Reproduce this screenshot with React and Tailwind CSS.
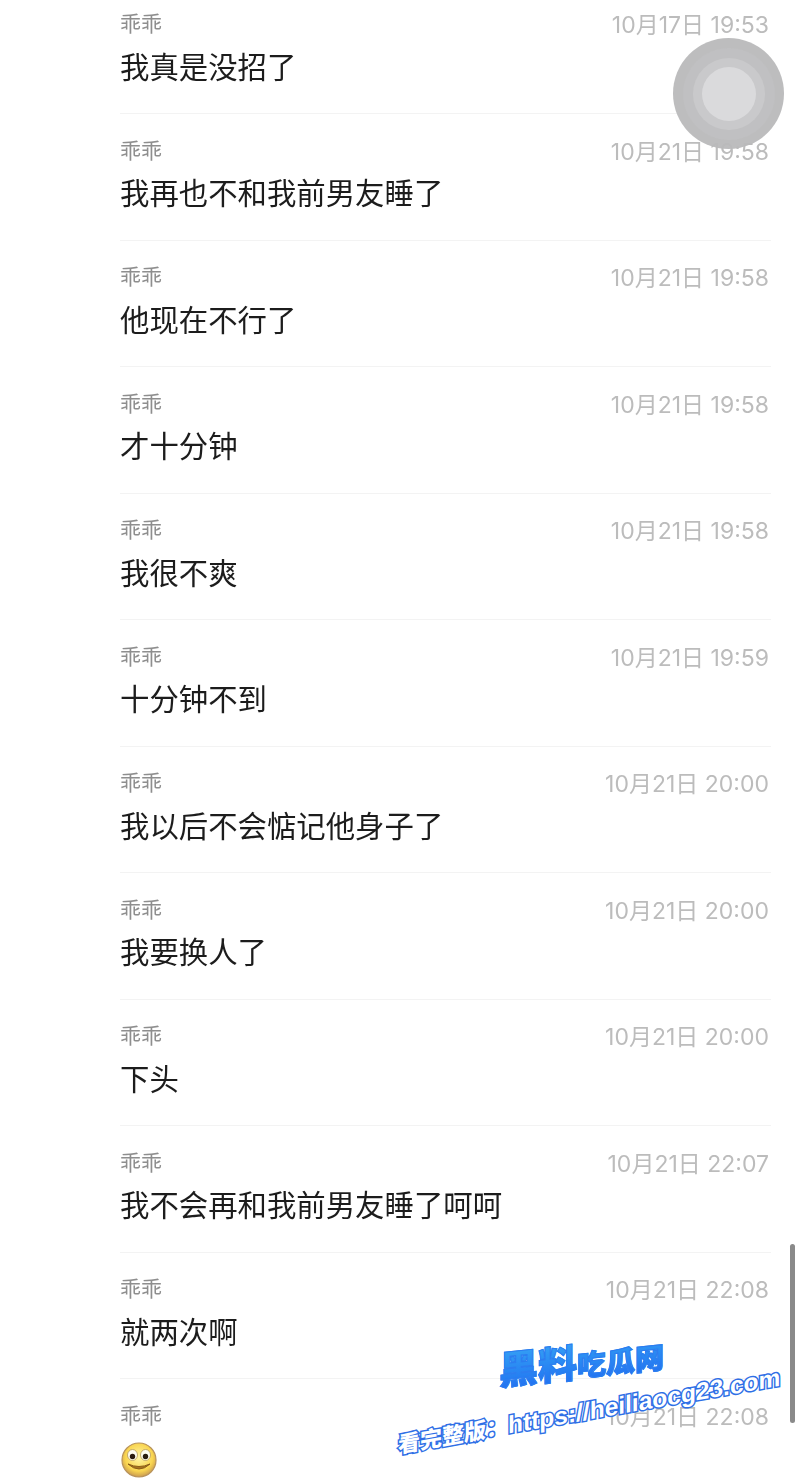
const messages = [
  { time: "10月17日 19:53", text: "我真是没招了" },
  { time: "10月21日 19:58", text: "我再也不和我前男友睡了" },
  { time: "10月21日 19:58", text: "他现在不行了" },
  { time: "10月21日 19:58", text: "才十分钟" },
  { time: "10月21日 19:58", text: "我很不爽" },
  { time: "10月21日 19:59", text: "十分钟不到" },
  { time: "10月21日 20:00", text: "我以后不会惦记他身子了" },
  { time: "10月21日 20:00", text: "我要换人了" },
  { time: "10月21日 20:00", text: "下头" },
  { time: "10月21日 22:07", text: "我不会再和我前男友睡了呵呵" },
  { time: "10月21日 22:08", text: "就两次啊" },
  { time: "10月21日 22:08", text: "" },
]

function Smiley() {
  return (
    <svg width="38" height="38" viewBox="0 0 38 38">
      <defs>
        <radialGradient id="face" cx="50%" cy="42%" r="58%">
          <stop offset="0%" stopColor="#fff6a8" />
          <stop offset="70%" stopColor="#f9d550" />
          <stop offset="100%" stopColor="#c99a50" />
        </radialGradient>
      </defs>
      <circle cx="19" cy="19" r="17" fill="url(#face)" stroke="#b8935c" strokeWidth="1.2" />
      <ellipse cx="12.5" cy="14" rx="5" ry="5.5" fill="#fffdf0" stroke="#b79a5a" strokeWidth="0.8" />
      <ellipse cx="25.5" cy="14" rx="5" ry="5.5" fill="#fffdf0" stroke="#b79a5a" strokeWidth="0.8" />
      <circle cx="12.5" cy="15.5" r="2.7" fill="#2a1c10" />
      <circle cx="25.5" cy="15.5" r="2.7" fill="#2a1c10" />
      <path d="M8 23 Q19 33 30 23 Q19 28 8 23 Z" fill="#a8741e" stroke="#8a5c18" strokeWidth="1" strokeLinejoin="round" />
    </svg>
  )
}

function Row({ time, text, last }) {
  return (
    <div className={`h-[126.5px] mr-[29px] ml-[120px] pt-[24px] ${last ? "" : "border-b border-[#f3f3f3]"}`}>
      <div className="flex items-center justify-between h-[24px] pr-[2px]">
        <span className="text-[21px] leading-[24px] text-[#8e8e8e] pt-[1px]">乖乖</span>
        <span className="font-['Inter','Noto_Sans_CJK_SC',sans-serif] text-[23px] leading-[24px] text-[#bcbcbc] pt-[3px] whitespace-pre">{time}</span>
      </div>
      {last ? (
        <div className="mt-[14px]">
          <Smiley />
        </div>
      ) : (
        <div className="mt-[8px] text-[29.4px] leading-[48px] text-[#1c1c1c] whitespace-nowrap">{text}</div>
      )}
    </div>
  )
}

export default function App() {
  return (
    <div className="relative w-[800px] h-[1480px] overflow-hidden bg-white font-['Liberation_Sans','Noto_Sans_CJK_SC',sans-serif]">
      <div className="-mt-[12.5px] blur-[0.4px]">
        {messages.map((m, i) => (
          <Row key={i} time={m.time} text={m.text} last={i === messages.length - 1} />
        ))}
      </div>

      {/* assistive touch */}
      <div className="absolute left-[673px] top-[38px] w-[111px] h-[111px] rounded-full bg-[#b9b9bb]/95 blur-[0.5px] flex items-center justify-center">
        <div className="w-[92px] h-[92px] rounded-full bg-[#c0c0c2] flex items-center justify-center">
          <div className="w-[72px] h-[72px] rounded-full bg-[#c9c9cb] flex items-center justify-center">
            <div className="w-[54px] h-[54px] rounded-full bg-[#dadadc]" />
          </div>
        </div>
      </div>

      {/* scrollbar */}
      <div className="absolute left-[790px] top-[1244px] w-[5px] h-[179px] rounded-full bg-[#8a8a8a]" />

      {/* watermark */}
      <div className="absolute left-[499px] top-[1345px] origin-left -skew-y-[6deg] leading-[46px] font-black whitespace-nowrap text-transparent bg-clip-text bg-gradient-to-b from-[#38a4f4] to-[#2164f0] [-webkit-text-stroke:1px_#2b7df0] font-['Noto_Sans_CJK_SC',sans-serif]">
        <span className="text-[39px]">黑料</span>
        <span className="text-[29px]">吃瓜网</span>
      </div>
      <div className="absolute left-[398px] top-[1427px] origin-left -skew-y-[10deg] leading-[32px] font-bold whitespace-nowrap text-white [-webkit-text-stroke:3px_#2f6fe6] [paint-order:stroke_fill] font-['Liberation_Sans','Noto_Sans_CJK_SC',sans-serif]">
        <span className="text-[22px] font-black font-['Noto_Sans_CJK_SC',sans-serif]">看完整版：</span>
        <span className="text-[24.5px]">https://heiliaocg23.com</span>
      </div>
    </div>
  )
}
